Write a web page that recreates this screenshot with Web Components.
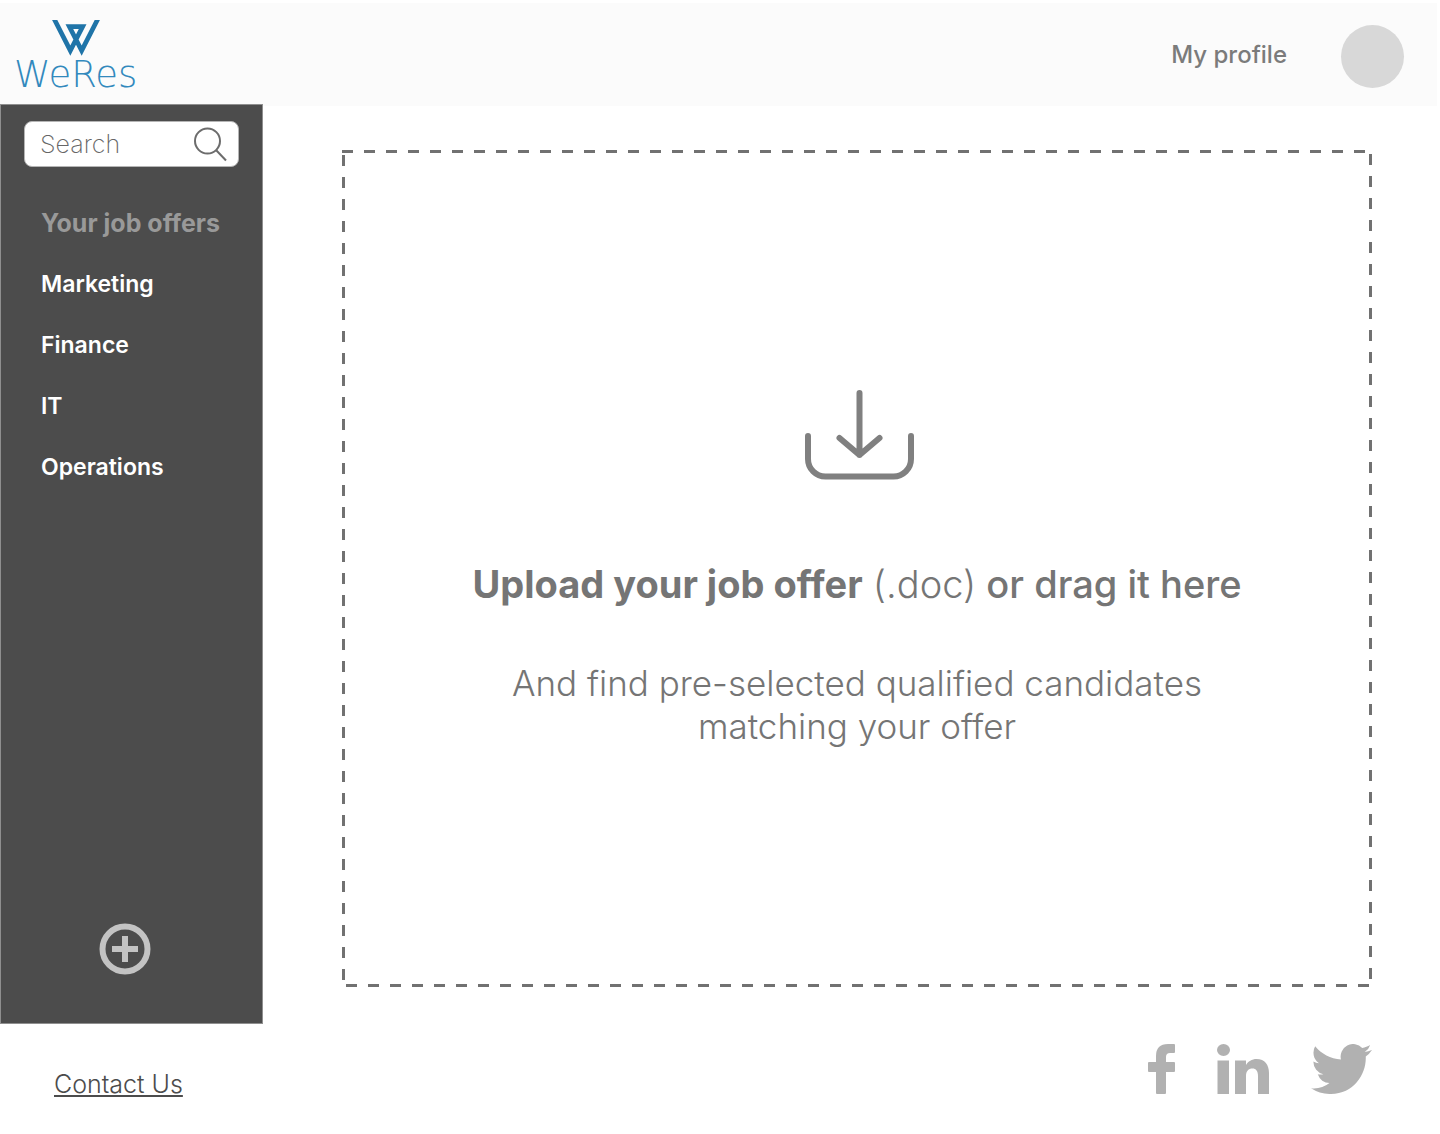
<!DOCTYPE html>
<html lang="en">
<head>
<meta charset="utf-8">
<title>WeRes</title>
<style>
  body { margin: 0; background: #fff; font-family: Inter, "Liberation Sans", sans-serif; }
</style>
</head>
<body>
<weres-app>
  <weres-header slot="header"></weres-header>
  <weres-sidebar slot="sidebar">
    <weres-nav-item current>Your job offers</weres-nav-item>
    <weres-nav-item>Marketing</weres-nav-item>
    <weres-nav-item>Finance</weres-nav-item>
    <weres-nav-item>IT</weres-nav-item>
    <weres-nav-item>Operations</weres-nav-item>
  </weres-sidebar>
  <weres-upload slot="main">
    <span slot="title"><strong>Upload your job offer</strong> <span style="font-weight:300">(.doc)</span> or drag it here</span>
    <span slot="text">And find pre-selected qualified candidates matching your offer</span>
  </weres-upload>
  <weres-footer slot="footer"></weres-footer>
</weres-app>

<script>
const define = (name, html) => {
  const template = document.createElement('template');
  template.innerHTML = html;
  customElements.define(name, class extends HTMLElement {
    constructor() {
      super();
      this.attachShadow({ mode: 'open' }).append(template.content.cloneNode(true));
    }
  });
};

define('weres-app', `
  <style>
    :host { display: flex; flex-direction: column; min-height: 100vh; }
    .middle { flex: 1; display: flex; }
    main { flex: 1; min-width: 0; display: flex; padding: 44px 68px 37px 79px; }
  </style>
  <slot name="header"></slot>
  <div class="middle">
    <slot name="sidebar"></slot>
    <main><slot name="main"></slot></main>
  </div>
  <slot name="footer"></slot>`);

define('weres-logo', `
  <style>
    :host { display: block; }
    a { display: flex; flex-direction: column; align-items: center; color: #3289bd; text-decoration: none;
        font: 200 37px/38px "DejaVu Sans", "DejaVu Sans Light", sans-serif; }
    svg { display: block; }
  </style>
  <a href="#">
    <svg width="48" height="36" viewBox="154 60 144 108" aria-hidden="true">
      <path d="M157 50 209 152 246 80H206L243 152 295 50" fill="none" stroke="#1f74a8" stroke-width="14"/>
    </svg>
    <span>WeRes</span>
  </a>`);

define('weres-header', `
  <style>
    :host { display: block; margin: 3px 3px 0 0; background: #fbfbfb; }
    header { display: flex; align-items: center; justify-content: space-between; height: 103px; padding: 4px 33px 0 14px; box-sizing: border-box; }
    .profile { display: flex; align-items: center; gap: 54px; color: #7b7b7b; font-size: 24px; font-weight: 500; text-decoration: none; }
    .name { padding-bottom: 4px; }
    .avatar { width: 63px; height: 63px; border-radius: 50%; background: #d8d8d8; }
  </style>
  <header>
    <weres-logo></weres-logo>
    <a class="profile" href="#"><span class="name">My profile</span><span class="avatar"></span></a>
  </header>`);

define('weres-nav-item', `
  <style>
    :host { display: block; }
    a { display: block; line-height: 61px; font-size: 23px; font-weight: 600; color: #fff; text-decoration: none; white-space: nowrap; }
    :host([current]) a { font-size: 25px; font-weight: 700; color: #999; }
  </style>
  <a href="#"><slot></slot></a>`);

define('weres-search', `
  <style>
    :host { display: block; }
    label { display: flex; align-items: center; height: 46px; box-sizing: border-box; padding: 0 11px 0 15px;
            background: #fff; border: 1px solid #b5b5b5; border-radius: 8px; }
    input { flex: 1; min-width: 0; border: 0; padding: 0; outline: 0; background: none; font: inherit; font-size: 25px; font-weight: 200; color: #666; }
    input::placeholder { color: #666; opacity: 1; }
    svg { flex: none; }
  </style>
  <label>
    <input type="search" placeholder="Search" aria-label="Search">
    <svg width="34" height="36" viewBox="0 0 34 36" fill="none" stroke="#6c6c6c" stroke-width="2" aria-hidden="true">
      <circle cx="14.500" cy="15" r="12.500"/><path d="M23 24 33 34.500"/>
    </svg>
  </label>`);

define('weres-sidebar', `
  <style>
    :host { display: flex; flex-direction: column; box-sizing: border-box; width: 263px; flex: none; margin-top: -2px;
            padding: 16px 23px 48px; background: #4c4c4c; border: 1px solid #8f8f8f; }
    nav { flex: 1; padding: 26px 0 0 17px; }
    button { align-self: flex-start; margin-left: 75px; padding: 0; border: 0; background: none; }
    svg { display: block; }
  </style>
  <weres-search></weres-search>
  <nav aria-label="Job offers"><slot></slot></nav>
  <button type="button" aria-label="Add job offer">
    <svg width="52" height="52" viewBox="0 0 52 52" fill="none" stroke="#c3c3c3" stroke-width="6">
      <circle cx="26" cy="26" r="22.500"/><path d="M13 26H39M26 13V39"/>
    </svg>
  </button>`);

define('weres-upload', `
  <style>
    :host { flex: 1; min-width: 0; display: flex; color: #757575; --ink: #717171;
      --x: repeating-linear-gradient(90deg, var(--ink) 0 11px, transparent 11px 22px);
      --y: repeating-linear-gradient(180deg, var(--ink) 0 11px, transparent 11px 22px); }
    label { flex: 1; display: flex; flex-direction: column; align-items: center; justify-content: center; cursor: pointer; text-align: center;
      background:
        var(--x) 0 0 / 100% 3px no-repeat,
        var(--x) 4px 100% / calc(100% - 7px) 3px no-repeat,
        var(--y) 0 5px / 3px calc(100% - 8px) no-repeat,
        var(--y) 100% 4px / 3px calc(100% - 8px) no-repeat; }
    input { position: absolute; width: 1px; height: 1px; opacity: 0; }
    svg { display: block; }
    .title { margin-top: 82px; font-size: 38px; line-height: 44px; font-weight: 500; }
    .text { margin-top: 56px; max-width: 720px; font-size: 35px; line-height: 43px; font-weight: 300; }
  </style>
  <label>
    <input type="file" accept=".doc">
    <svg width="115" height="90" viewBox="-5 0 115 90" fill="none" stroke="#808080" stroke-width="6" stroke-linecap="round" stroke-linejoin="round" aria-hidden="true">
      <path d="M3 46V69A17.500 17.500 0 0 0 20.500 86.500H88.500A17.500 17.500 0 0 0 106 69V46M54.500 3V65M34.500 48 54.500 65 74.500 48"/>
    </svg>
    <span class="title"><slot name="title"></slot></span>
    <span class="text"><slot name="text"></slot></span>
  </label>`);

define('weres-footer', `
  <style>
    :host { display: block; }
    footer { display: flex; align-items: flex-start; justify-content: space-between; height: 110px; box-sizing: border-box; padding: 20px 68px 0 54px; }
    .contact { margin-top: 26px; font-size: 25px; line-height: 28px; font-weight: 300; color: #4c4c4c; text-underline-offset: 2px; text-decoration-thickness: 2px; }
    .social { display: flex; gap: 42px; }
    svg { display: block; fill: #b1b1b1; }
  </style>
  <footer>
    <a class="contact" href="#">Contact Us</a>
    <div class="social">
      <a href="#" aria-label="Facebook"><svg width="27" height="50" viewBox="0 0 27 50">
        <path d="M26 0Q27 0 27 1V8Q27 9 26 9H22Q18 9 18 13V18H26Q27 18 27 19V27Q27 28 26 28H18V49Q18 50 17 50H9Q8 50 8 49V28H1Q0 28 0 27V19Q0 18 1 18H8V12Q8 0 20 0Z"/></svg></a>
      <a href="#" aria-label="LinkedIn"><svg width="52" height="50" viewBox="0 0 52 50">
        <ellipse cx="6.500" cy="6" rx="6.500" ry="6"/>
        <path d="M0.500 16.500H12V50H0.500ZM18 16.500H29V21C31 17.500 35 15 39.500 15C48 15 52 21 52 29V50H41V32C41 27 39 24.500 35.500 24.500C31.500 24.500 29 27 29 32V50H18Z"/></svg></a>
      <a href="#" aria-label="Twitter"><svg width="61" height="50" viewBox="0 2.250 24 19.500" preserveAspectRatio="none">
        <path d="M23.953 4.570a10 10 0 01-2.825.775 4.958 4.958 0 002.163-2.723c-.951.555-2.005.959-3.127 1.184a4.920 4.920 0 00-8.384 4.482C7.690 8.095 4.067 6.130 1.640 3.162a4.822 4.822 0 00-.666 2.475c0 1.710.870 3.213 2.188 4.096a4.904 4.904 0 01-2.228-.616v.060a4.923 4.923 0 003.946 4.827 4.996 4.996 0 01-2.212.085 4.936 4.936 0 004.604 3.417 9.867 9.867 0 01-6.102 2.105c-.390 0-.779-.023-1.170-.067a13.995 13.995 0 007.557 2.209c9.053 0 13.998-7.496 13.998-13.985 0-.210 0-.420-.015-.630A9.935 9.935 0 0024 4.590z"/></svg></a>
    </div>
  </footer>`);
</script>
</body>
</html>
